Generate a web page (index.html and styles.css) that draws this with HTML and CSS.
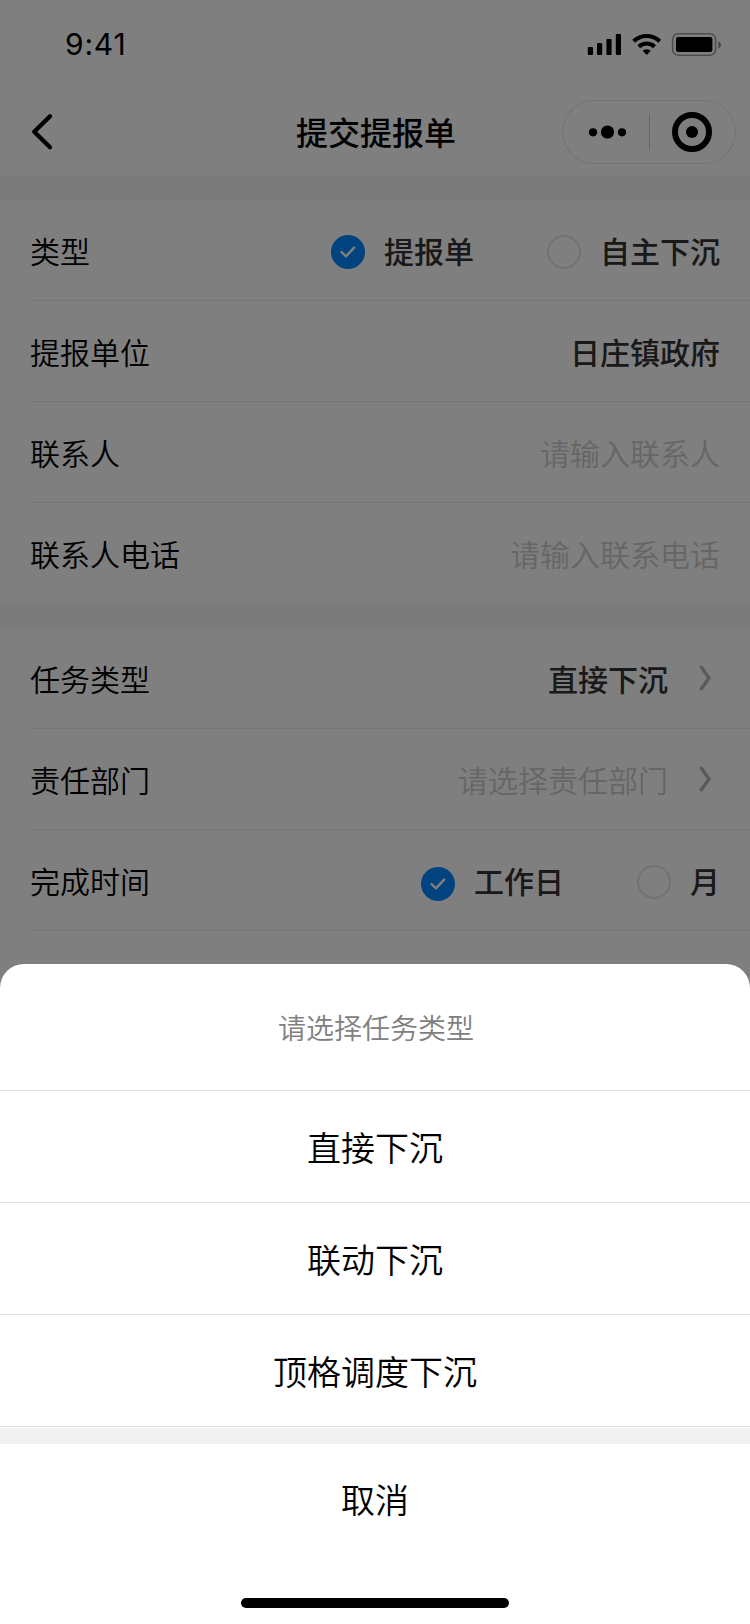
FILE: index.html
```
<!DOCTYPE html>
<html lang="zh-CN">
<head>
<meta charset="utf-8">
<title>提交提报单</title>
<link rel="stylesheet" href="styles.css">
</head>
<body>
<div class="screen">
  <header class="header">
    <div class="status">
      <span class="time">9:41</span>
      <svg class="status-icons" width="136" height="24" viewBox="0 0 136 24">
        <rect x="0.8" y="14" width="5.2" height="8" rx="1"/>
        <rect x="10" y="10" width="5.2" height="12" rx="1"/>
        <rect x="19.4" y="6" width="5.2" height="16" rx="1"/>
        <rect x="28.8" y="1" width="5.2" height="21" rx="1"/>
        <g fill="none" stroke="#000" stroke-width="4">
          <path d="M46.600 8.200a19 19 0 0 1 26.200 0"/>
          <path d="M51.800 13.700a11.500 11.500 0 0 1 15.800 0"/>
        </g>
        <path d="M59.700 22l-4.100-4.200a6 6 0 0 1 8.200 0z"/>
        <rect x="85.600" y="0.800" width="43" height="21.400" rx="5.500" fill="none" stroke="#000" stroke-opacity=".4" stroke-width="1.500"/>
        <rect x="89" y="4" width="36.400" height="15" rx="2"/>
        <path d="M131.300 8v7.600c3.400-1.300 3.400-6.300 0-7.600z" fill-opacity=".45"/>
      </svg>
    </div>
    <div class="nav">
      <svg class="back" width="24" height="40" viewBox="0 0 24 40"><path d="M20 4.200L4.200 19.700L20 35.200" fill="none" stroke="#000" stroke-width="4.300" stroke-linecap="round" stroke-linejoin="round"/></svg>
      <h1 class="title">提交提报单</h1>
      <div class="capsule">
        <svg width="174" height="64" viewBox="0 0 174 64">
          <circle cx="31" cy="32.300" r="4.100"/><circle cx="45.500" cy="32" r="6.600"/><circle cx="60" cy="32.300" r="4.100"/>
          <path d="M87.500 13.300v37.400" stroke="#000" stroke-opacity=".2"/>
          <circle cx="130" cy="32" r="17" fill="none" stroke="#000" stroke-width="6"/><circle cx="130" cy="32" r="6"/>
        </svg>
      </div>
    </div>
  </header>
  <section class="group">
    <div class="row"><span>类型</span>
      <div class="options">
        <span class="option"><svg class="radio" width="34" height="34" viewBox="0 0 34 34"><circle cx="17" cy="17" r="17" fill="#0087ff"/><path d="M10.500 17l4.400 4.400l8.300-8.700" class="tick"/></svg><span>提报单</span></span>
        <span class="option"><i class="radio empty"></i><span>自主下沉</span></span>
      </div>
    </div>
    <div class="row"><span>提报单位</span><span class="value">日庄镇政府</span></div>
    <div class="row"><span>联系人</span><span class="placeholder">请输入联系人</span></div>
    <div class="row"><span>联系人电话</span><span class="placeholder">请输入联系电话</span></div>
  </section>
  <section class="group">
    <div class="row"><span>任务类型</span><span class="value link">直接下沉<svg class="arrow" width="22" height="28" viewBox="0 0 22 28"><path d="M2.500 2.700l8 11.300l-8 11.300"/></svg></span></div>
    <div class="row"><span>责任部门</span><span class="placeholder link">请选择责任部门<svg class="arrow" width="22" height="28" viewBox="0 0 22 28"><path d="M2.500 2.700l8 11.300l-8 11.300"/></svg></span></div>
    <div class="row"><span>完成时间</span>
      <div class="options">
        <span class="option"><svg class="radio low" width="34" height="34" viewBox="0 0 34 34"><circle cx="17" cy="17" r="17" fill="#0087ff"/><path d="M10.500 17l4.400 4.400l8.300-8.700" class="tick"/></svg><span>工作日</span></span>
        <span class="option"><i class="radio empty"></i><span>月</span></span>
      </div>
    </div>
    <div class="row"></div>
  </section>
  <div class="mask">
    <div class="sheet">
      <div class="sheet-title">请选择任务类型</div>
      <div class="sheet-item">直接下沉</div>
      <div class="sheet-item">联动下沉</div>
      <div class="sheet-item">顶格调度下沉</div>
      <div class="sheet-gap"></div>
      <div class="sheet-cancel">取消</div>
      <div class="home-bar"></div>
    </div>
  </div>
</div>
</body>
</html>
```
FILE: styles.css
```
* { box-sizing: border-box; }
body {
  margin: 0;
  font-family: "Noto Sans CJK SC", sans-serif;
  font-size: 30px;
  font-weight: 350;
  line-height: 44px;
  color: #000;
}
svg { display: block; flex: none; }
.screen {
  position: relative;
  width: 750px;
  height: 1624px;
  overflow: hidden;
  background: #f6f6f6;
}
.header { height: 176px; background: #fff; }
.status {
  height: 88px;
  padding: 2px 27px 0 65px;
  display: flex;
  justify-content: space-between;
  align-items: center;
}
.time {
  margin-bottom: 2px;
  font-family: Inter, sans-serif;
  font-size: 30px;
  font-weight: 400;
  letter-spacing: 0.8px;
}
.nav {
  height: 88px;
  padding: 0 14px 0 30px;
  display: grid;
  grid-template-columns: 174px 1fr 174px;
  align-items: center;
}
.title {
  margin: 0 0 3px -14px;
  text-align: center;
  font-size: 32px;
  font-weight: 500;
}
.capsule {
  width: 174px;
  height: 64px;
  border-radius: 32px;
  box-shadow: inset 0 0 0 1px #e6e6e6;
}
.group { margin-top: 24px; padding-left: 30px; background: #fff; }
.row {
  height: 101px;
  padding-right: 30px;
  display: flex;
  align-items: center;
  justify-content: space-between;
  border-bottom: 1px solid #ededed;
}
.row:last-child { border-bottom-color: transparent; }
.value, .option { color: #333; font-weight: 500; }
.placeholder { color: #ccc; }
.link { display: flex; align-items: center; gap: 31px; }
.arrow { width: 21px; margin-bottom: 1px; }
.arrow path {
  fill: none;
  stroke: #b5b5b5;
  stroke-width: 3.6;
  stroke-linecap: round;
  stroke-linejoin: round;
}
.options { display: flex; gap: 73px; }
.option { display: flex; align-items: center; gap: 19px; }
.radio { width: 34px; height: 34px; margin-top: 4px; }
.radio.low { margin-top: 8px; }
.empty { border: 2px solid #e4e4e4; border-radius: 50%; }
.tick {
  fill: none;
  stroke: #fff;
  stroke-width: 2.4;
  stroke-linecap: round;
  stroke-linejoin: round;
}
.mask {
  position: absolute;
  inset: 0;
  display: flex;
  align-items: flex-end;
  background: rgba(0, 0, 0, .5);
}
.sheet {
  width: 100%;
  height: 660px;
  background: #fff;
  border-radius: 24px 24px 0 0;
  text-align: center;
  font-size: 34px;
}
.sheet-title {
  height: 127px;
  padding-left: 2px;
  border-bottom: 1px solid #e0e0e0;
  line-height: 126px;
  font-size: 28px;
  color: #808080;
}
.sheet-item { height: 112px; line-height: 112px; border-bottom: 1px solid #e0e0e0; }
.sheet-gap { height: 16px; margin-top: 1px; background: #f1f1f1; }
.sheet-cancel { height: 112px; line-height: 110px; }
.home-bar { width: 268px; height: 10px; margin: 42px auto 0; border-radius: 5px; background: #000; }
```
